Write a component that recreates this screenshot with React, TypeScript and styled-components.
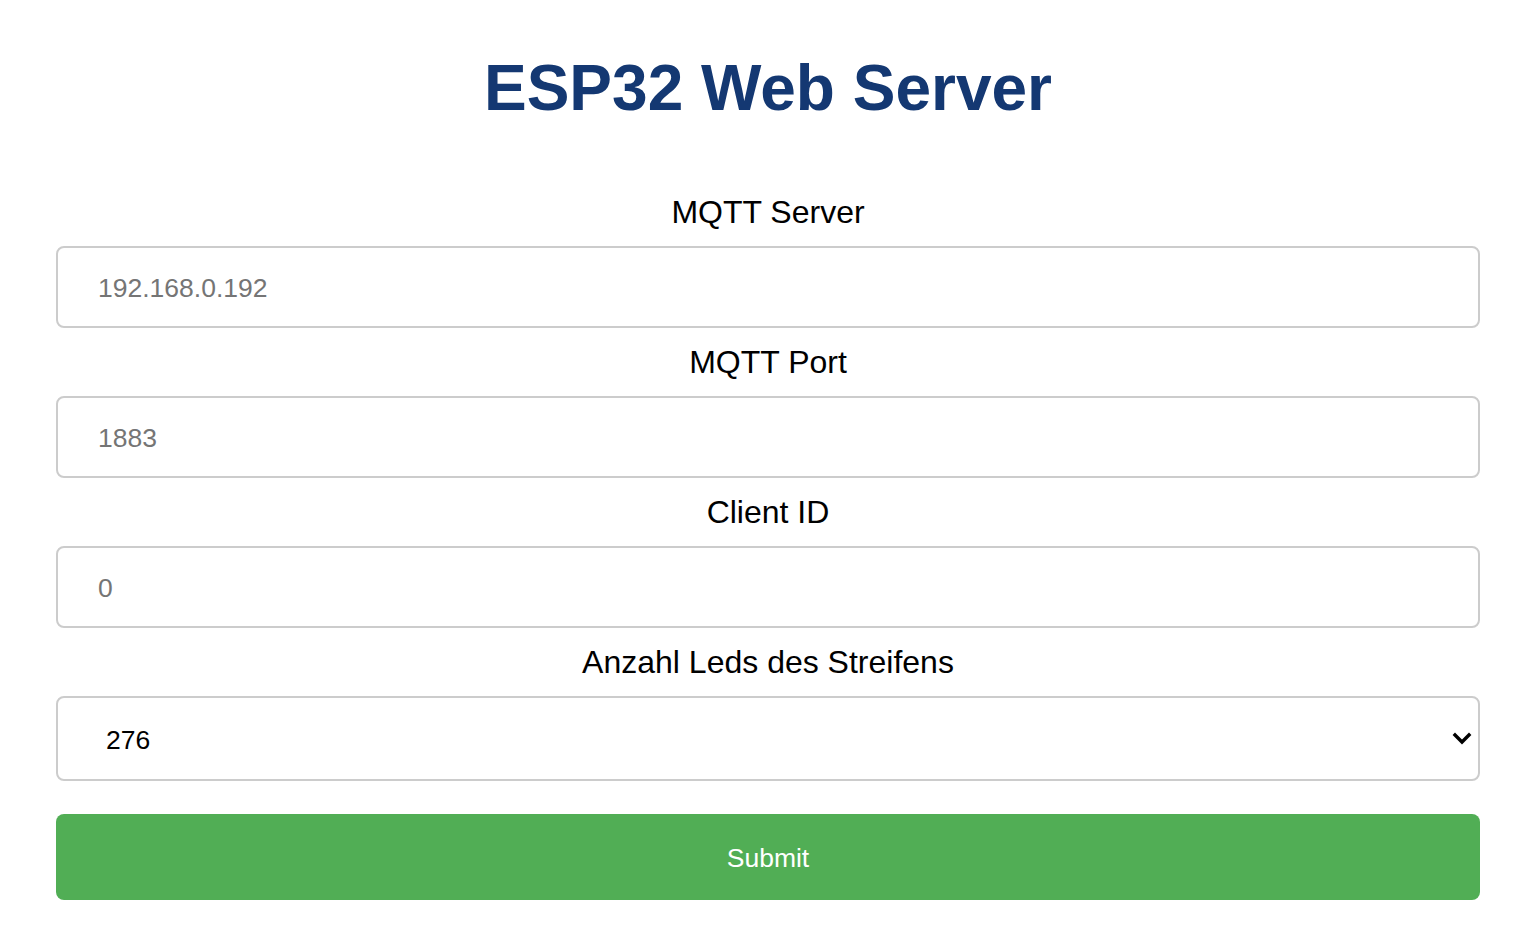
import React from "react";
import styled, { createGlobalStyle } from "styled-components";

const Global = createGlobalStyle`
  html, body { margin: 0; padding: 0; background: #ffffff; }
  body { font-family: "Liberation Sans", Arial, Helvetica, sans-serif; }
  * { box-sizing: border-box; }
`;

const Page = styled.div`
  padding: 52px 53px 40px 56px;
`;

const Title = styled.h1`
  margin: 0 0 52px;
  text-align: center;
  font-size: 64px;
  font-weight: 700;
  line-height: 73.5px;
  color: #143872;
`;

const Form = styled.form`
  display: flex;
  flex-direction: column;
`;

const Label = styled.label`
  display: block;
  text-align: center;
  font-size: 32px;
  line-height: 37px;
  color: #000;
  margin: 16px 0 15px;
`;

const Input = styled.input`
  display: block;
  width: 100%;
  height: 82px;
  padding: 4px 40px 0;
  font-family: "Liberation Sans", Arial, sans-serif;
  font-size: 26.5px;
  color: #000;
  border: 2px solid #cccccc;
  border-radius: 8px;
  background: #fff;
  outline: none;
  &::placeholder { color: #757575; }
`;

const SelectWrap = styled.div`
  position: relative;
  width: 100%;
`;

const Select = styled.select`
  display: block;
  width: 100%;
  height: 85px;
  padding: 4px 48px 0;
  font-family: "Liberation Sans", Arial, sans-serif;
  font-size: 26.5px;
  color: #000;
  border: 2px solid #cccccc;
  border-radius: 8px;
  background: #fff;
  appearance: none;
  -webkit-appearance: none;
  outline: none;
`;

const Chevron = styled.svg`
  position: absolute;
  right: 8px;
  top: 50%;
  transform: translateY(-50%);
  pointer-events: none;
`;

const Button = styled.button`
  margin-top: 33px;
  width: 100%;
  height: 86px;
  padding: 4px 0 0;
  border: none;
  border-radius: 8px;
  background: #51ae55;
  color: #fff;
  font-family: "Liberation Sans", Arial, sans-serif;
  font-size: 26.5px;
  cursor: pointer;
`;

export default function App() {
  return (
    <>
      <Global />
      <Page>
        <Title>ESP32 Web Server</Title>
        <Form onSubmit={(e) => e.preventDefault()}>
          <Label htmlFor="server">MQTT Server</Label>
          <Input id="server" placeholder="192.168.0.192" />
          <Label htmlFor="port">MQTT Port</Label>
          <Input id="port" placeholder="1883" />
          <Label htmlFor="client">Client ID</Label>
          <Input id="client" placeholder="0" />
          <Label htmlFor="leds">Anzahl Leds des Streifens</Label>
          <SelectWrap>
            <Select id="leds" defaultValue="276">
              <option value="60">60</option>
              <option value="144">144</option>
              <option value="276">276</option>
            </Select>
            <Chevron width="20" height="14" viewBox="0 0 20 14">
              <path d="M3 4 L10 11 L17 4" fill="none" stroke="#000" strokeWidth="3.4" strokeLinecap="square" />
            </Chevron>
          </SelectWrap>
          <Button type="submit">Submit</Button>
        </Form>
      </Page>
    </>
  );
}
